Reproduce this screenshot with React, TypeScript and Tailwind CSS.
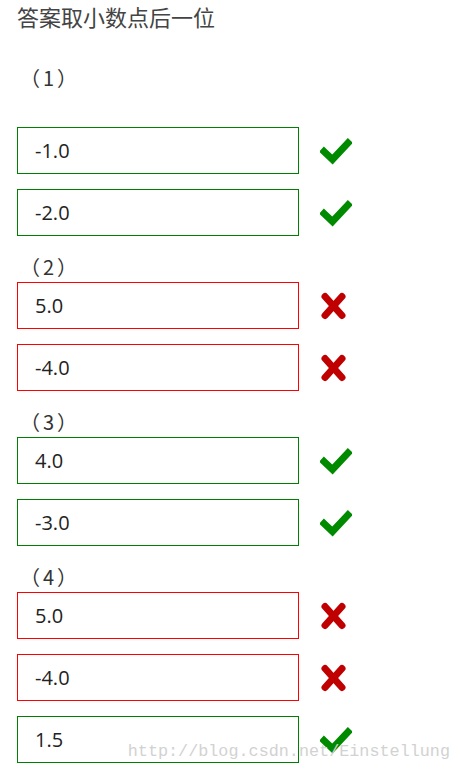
import React from 'react';

type Answer = { value: string; ok: boolean };

const sections: { label: string; answers: Answer[] }[] = [
  { label: '（1）', answers: [{ value: '-1.0', ok: true }, { value: '-2.0', ok: true }] },
  { label: '（2）', answers: [{ value: '5.0', ok: false }, { value: '-4.0', ok: false }] },
  { label: '（3）', answers: [{ value: '4.0', ok: true }, { value: '-3.0', ok: true }] },
  { label: '（4）', answers: [{ value: '5.0', ok: false }, { value: '-4.0', ok: false }, { value: '1.5', ok: true }] },
];

const CheckIcon = () => (
  <svg width="32" height="28" viewBox="0 0 32 28" className="shrink-0">
    <polyline points="4,14.5 12.5,22.5 28,6" fill="none" stroke="#008a00" strokeWidth="7" strokeLinecap="square" strokeLinejoin="miter" />
  </svg>
);

const CrossIcon = () => (
  <svg width="32" height="28" viewBox="0 0 32 28" className="shrink-0">
    <g stroke="#c00000" strokeWidth="7" strokeLinecap="round">
      <line x1="5" y1="4.5" x2="22" y2="23.5" />
      <line x1="22" y1="4.5" x2="5" y2="23.5" />
    </g>
  </svg>
);

const AnswerRow = ({ answer }: { answer: Answer }) => (
  <div className="flex items-center gap-[21px] mb-[15px]">
    <div
      className={`w-[282px] h-[47px] flex items-center pl-[17px] border bg-white text-[20px] text-[#222] ${
        answer.ok ? 'border-[#008000]' : 'border-[#ff0000]'
      }`}
      style={{ fontFamily: '"Open Sans", "Noto Sans", sans-serif' }}
    >
      {answer.value}
    </div>
    {answer.ok ? <CheckIcon /> : <CrossIcon />}
  </div>
);

const App: React.FC = () => {
  return (
    <div
      className="relative w-[460px] h-[774px] overflow-hidden bg-white pl-[17px] text-[#333]"
      style={{ fontFamily: '"Noto Sans CJK SC", "Noto Sans", sans-serif' }}
    >
      <div className="h-[32px] leading-[32px] text-[22px] text-[#444] whitespace-nowrap">答案取小数点后一位</div>

      {sections.map((s, i) => (
        <div key={s.label}>
          <div
            className={`pl-[3px] text-[20px] tracking-[3px] ${
              i === 0 ? 'mt-[30px] mb-[33px] h-[32px] leading-[32px]' : 'h-[31px] leading-[31px]'
            }`}
          >
            {s.label}
          </div>
          {s.answers.map((a, j) => (
            <AnswerRow key={j} answer={a} />
          ))}
        </div>
      ))}

      <div
        className="absolute right-[10px] bottom-[13px] text-[16.8px] leading-none text-[#d2d2d2] whitespace-nowrap"
        style={{ fontFamily: '"Liberation Mono", monospace' }}
      >
        http://blog.csdn.net/Einstellung
      </div>
    </div>
  );
};

export default App;
